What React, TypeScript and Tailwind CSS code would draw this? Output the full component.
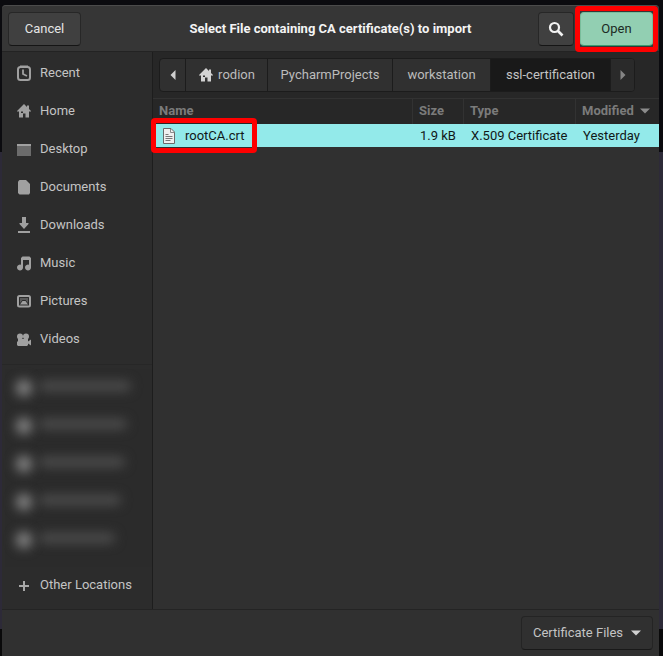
import type { ReactNode } from "react";

type Place = { label: string; icon: ReactNode };

function Glyph({ children }: { children: ReactNode }) {
  return (
    <svg viewBox="0 0 16 16" className="size-4 shrink-0" fill="currentColor" aria-hidden="true">
      {children}
    </svg>
  );
}

const homePath = "M8 1 1 8v.500h2V14.500h4v-4h2.500v4H13V8.500h2V8l-2-2V2.500h-2V4L8 1ZM5 8.500h2V10H5V8.500Z";

function HomeIcon() {
  return (
    <Glyph>
      <path fillRule="evenodd" d={homePath} />
    </Glyph>
  );
}

const places: Place[] = [
  {
    label: "Recent",
    icon: (
      <Glyph>
        <rect x="2" y="2" width="12" height="13" rx="2.500" fill="none" stroke="currentColor" strokeWidth="2" />
        <path d="M4 .500h8V2H4zM4 15h8v1H4z" />
        <path d="M7 4.500V9l4 2" fill="none" stroke="currentColor" strokeWidth="1.800" />
      </Glyph>
    ),
  },
  { label: "Home", icon: <HomeIcon /> },
  {
    label: "Desktop",
    icon: (
      <Glyph>
        <path fill="#6b6b6b" d="M1 3h14v12H1z" />
        <path d="M1 3h14v2H1z" />
      </Glyph>
    ),
  },
  {
    label: "Documents",
    icon: (
      <Glyph>
        <path d="M3.500 1H10l4 4v9l-1 1.500H3.500L2 14V2.500L3.500 1Z" />
      </Glyph>
    ),
  },
  {
    label: "Downloads",
    icon: (
      <Glyph>
        <path d="M6 0h4v6h2.500v1L8 12 3.500 7V6H6V0ZM2 14h12v2H2z" />
      </Glyph>
    ),
  },
  {
    label: "Music",
    icon: (
      <Glyph>
        <path d="M5 3 6.500 1.500H13.500L15 3v9.500a3 3 0 1 1-2-2.800V5H7v7.500a3 3 0 1 1-2-2.800V3Z" />
      </Glyph>
    ),
  },
  {
    label: "Pictures",
    icon: (
      <Glyph>
        <rect x="2" y="3" width="12" height="10.500" rx="1.500" fill="none" stroke="currentColor" strokeWidth="2" />
        <path d="M4 5h8v5L9.500 7h-3L4 10V5Z" opacity=".4" />
        <path d="M4 11.500 6.500 8h3l2.500 3.500H4Z" />
      </Glyph>
    ),
  },
  {
    label: "Videos",
    icon: (
      <Glyph>
        <circle cx="4" cy="5.500" r="3" />
        <circle cx="10" cy="5.500" r="3" />
        <path d="M2 8h10v2.500L15 8.500v6L12 12.500V14l-1 1H2l-1-1v-3.500h1V8Z" />
      </Glyph>
    ),
  },
];

const blurredBookmarks = ["w-[90px]", "w-[86px]", "w-[84px]", "w-20", "w-[74px]"];

const crumbs = [
  { label: "rodion", home: true, current: false, width: "basis-[82px]" },
  { label: "PycharmProjects", home: false, current: false, width: "basis-[125px]" },
  { label: "workstation", home: false, current: false, width: "basis-[98px]" },
  { label: "ssl-certification", home: false, current: true, width: "basis-[120px]" },
];

function Sidebar() {
  return (
    <nav
      aria-label="Places"
      className="flex w-[151px] shrink-0 flex-col border-r border-[#1d1d1d] bg-[#2c2c2c] pt-0.5 text-[#c4c4c4]"
    >
      <ul>
        {places.map((place) => (
          <li key={place.label}>
            <button type="button" className="flex h-[38px] w-full items-center gap-2 pl-3.5 text-left">
              <span className="text-[#a0a0a0]">{place.icon}</span>
              {place.label}
            </button>
          </li>
        ))}
      </ul>
      <div className="mt-1.5 border-t border-[#272727]" />
      <ul aria-hidden="true" className="ml-[3px] mt-1 bg-[#2b2b2b] pb-2">
        {blurredBookmarks.map((width) => (
          <li key={width} className="flex h-[38px] items-center gap-2 pl-[11px]">
            <span className="size-4 rounded-full bg-[#8a8a8a] blur-[6px]" />
            <span className={`mb-1 h-2 bg-[#565656] blur-[6px] ${width}`} />
          </li>
        ))}
      </ul>
      <button type="button" className="flex h-9 w-full items-center gap-2 pl-3.5 text-left">
        <span className="text-[#a8a8a8]">
          <Glyph>
            <path d="M7 4h2v4h4v2H9v4H7v-4H3V8h4z" />
          </Glyph>
        </span>
        Other Locations
      </button>
    </nav>
  );
}

function PathBar() {
  return (
    <div className="flex h-[46px] shrink-0 items-center bg-[#272727] px-1.5">
      <div className="flex h-[34px] overflow-hidden rounded border border-[#1c1c1c] bg-[#303030] text-[#bcbcbc]">
        <button type="button" aria-label="Scroll path left" className="flex w-[25px] items-center justify-center">
          <svg viewBox="0 0 6 10" className="h-2.5 w-1.5" fill="#cfcfcf" aria-hidden="true">
            <path d="M5.500 0v10L.500 5z" />
          </svg>
        </button>
        {crumbs.map((crumb) => (
          <button
            type="button"
            key={crumb.label}
            aria-current={crumb.current ? "page" : undefined}
            className={`flex shrink-0 items-center justify-center gap-1 whitespace-nowrap border-l border-[#1c1c1c] ${crumb.width} ${crumb.current ? "bg-[#191919] text-[#c4c4c4]" : ""}`}
          >
            {crumb.home && (
              <span className="text-[#d2d2d2]">
                <HomeIcon />
              </span>
            )}
            {crumb.label}
          </button>
        ))}
        <button
          type="button"
          aria-label="Scroll path right"
          className="flex w-6 items-center justify-center border-l border-[#1c1c1c] bg-[#2a2a2a]"
        >
          <svg viewBox="0 0 6 10" className="h-2.5 w-1.5" fill="#858585" aria-hidden="true">
            <path d="M.500 0v10l5-5z" />
          </svg>
        </button>
      </div>
    </div>
  );
}

function FileTable() {
  return (
    <table className="w-full table-fixed border-separate border-spacing-0 whitespace-nowrap text-left">
      <thead className="bg-[#272727] text-[#7b7b7b]">
        <tr className="h-[26px]">
          <th className="border-t border-[#323232] p-0 pb-0.5 pl-1.5">Name</th>
          <th className="w-[51px] border-l border-t border-[#323232] p-0 pb-0.5 pl-1.5">Size</th>
          <th className="w-28 border-l border-t border-[#323232] p-0 pb-0.5 pl-1.5">Type</th>
          <th
            aria-sort="descending"
            className="w-[84px] border-l border-t border-[#323232] p-0 pb-0.5 pl-1.5"
          >
            <button type="button" className="flex items-center gap-1.5">
              Modified
              <svg viewBox="0 0 10 6" className="h-1.5 w-2.5" fill="#8c8c8c" aria-hidden="true">
                <path d="M0 .500h10L5 5.500z" />
              </svg>
            </button>
          </th>
        </tr>
      </thead>
      <tbody className="bg-[#93eaea] text-[#111818]">
        <tr className="h-[23px]">
          <td className="relative p-0 pl-2">
            <span className="flex items-center gap-2">
              <svg viewBox="0 0 16 16" className="size-4" aria-hidden="true">
                <path d="M2.500.500h7.500l3.500 3.500v11.500h-11z" fill="#f0f0f0" stroke="#6a6a6a" />
                <path d="M9.500 1v3.500h4" fill="none" stroke="#8a8a8a" />
                <path d="M4.500 6.500h3M4.500 8.500h7M4.500 10.500h7M4.500 12.500h5" stroke="#777" />
              </svg>
              rootCA.crt
            </span>
            <span className="pointer-events-none absolute -inset-y-1.5 -left-0.5 w-[106px] rounded border-5 border-[#ff0000]" />
          </td>
          <td className="p-0 pl-2">1.9 kB</td>
          <td className="p-0 pl-2">X.509 Certificate</td>
          <td className="p-0 pl-2">Yesterday</td>
        </tr>
      </tbody>
    </table>
  );
}

export default function App() {
  return (
    <div className="flex h-screen bg-[linear-gradient(#0b0b0f_152px,#2d2a38_152px,#2d2a38_629px,#09090a_629px)] pl-0.5 pr-1 pt-[5px] font-[Roboto,'Noto_Sans',sans-serif] text-[13px] leading-5">
      <main className="flex min-w-0 flex-1 flex-col rounded-t bg-[#303030]">
        <header className="flex h-[47px] shrink-0 items-center rounded-t border-b border-t border-b-[#232323] border-t-[#4b4b4b] bg-[#363636] px-1.5">
          <div className="flex flex-1">
            <button
              type="button"
              className="h-[34px] w-[73px] rounded border border-b-[#151515] border-[#272727] bg-[#404040] text-[#e4e4e4]"
            >
              Cancel
            </button>
          </div>
          <h1 className="whitespace-nowrap font-bold text-[#f4f4f4]">
            Select File containing CA certificate(s) to import
          </h1>
          <div className="flex flex-1 justify-end gap-1.5">
            <button
              type="button"
              aria-label="Search"
              className="flex h-[34px] w-9 items-center justify-center rounded border border-b-[#151515] border-[#272727] bg-[#404040]"
            >
              <svg viewBox="0 0 16 16" className="size-4" fill="none" stroke="#f2f2f2" aria-hidden="true">
                <circle cx="6.500" cy="6.500" r="4.500" strokeWidth="2.200" />
                <path d="m10 10 4.500 4.500" strokeWidth="2.600" />
              </svg>
            </button>
            <div className="relative">
              <button
                type="button"
                className="block h-[34px] w-[73px] rounded border border-b-[#399d70] border-[#79bd9b] bg-[#92cfb2] text-[#1c2b24]"
              >
                Open
              </button>
              <span className="pointer-events-none absolute -inset-x-[5px] -inset-y-1.5 rounded border-5 border-[#ff0000]" />
            </div>
          </div>
        </header>
        <div className="flex min-h-0 flex-1">
          <Sidebar />
          <section aria-label="Files" className="flex min-w-0 flex-1 flex-col">
            <PathBar />
            <FileTable />
          </section>
        </div>
        <footer className="flex h-[47px] shrink-0 items-center justify-end border-t border-[#242424] px-1.5">
          <div className="relative">
            <select
              aria-label="File type"
              className="h-[34px] w-[132px] appearance-none rounded border border-b-[#191919] border-[#242424] bg-[#303030] pl-[11px] text-[#c4c4c4]"
            >
              <option>Certificate Files</option>
            </select>
            <svg
              viewBox="0 0 10 6"
              className="pointer-events-none absolute right-3 top-3.5 h-1.5 w-2.5"
              fill="#d0d0d0"
              aria-hidden="true"
            >
              <path d="M0 .500h10L5 5.500z" />
            </svg>
          </div>
        </footer>
      </main>
    </div>
  );
}
